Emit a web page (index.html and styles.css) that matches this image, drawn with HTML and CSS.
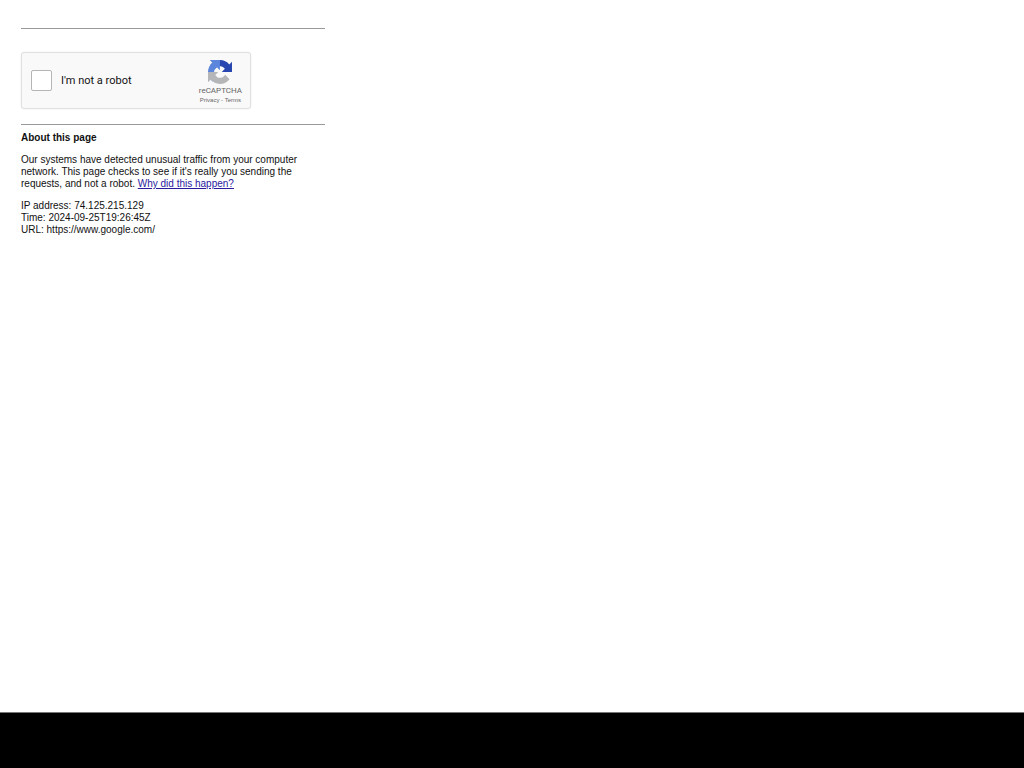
FILE: index.html
```
<!DOCTYPE html>
<html lang="en">
<head>
    <meta charset="UTF-8">
    <meta name="viewport" content="width=device-width, initial-scale=1.0">
    <title>https://www.google.com/</title>
    <link rel="stylesheet" href="styles.css">
</head>
<body>
    <main class="page">
        <hr>

        <form class="captcha">
            <input type="checkbox" id="robot">
            <label for="robot">I'm not a robot</label>
            <div class="brand">
                <svg class="logo" viewBox="0 0 64 64" aria-hidden="true">
                    <path fill="#2746b0" d="M64 31.955l-.033-1.37V4.687l-7.16 7.16C50.948 4.674 42.033.093 32.05.093c-10.4 0-19.622 4.96-25.458 12.64l11.736 11.86a15.55 15.55 0 0 1 4.754-5.334c2.05-1.6 4.952-2.906 8.968-2.906.485 0 .86.057 1.135.163 4.976.393 9.288 3.14 11.828 7.124l-8.307 8.307L64 31.953"/>
                    <path fill="#5b86dc" d="M31.862.094l-1.37.033H4.594l7.16 7.16C4.58 13.147 0 22.06 0 32.046c0 10.4 4.96 19.622 12.64 25.458L24.5 45.768a15.55 15.55 0 0 1-5.334-4.754c-1.6-2.05-2.906-4.952-2.906-8.968 0-.485.057-.86.163-1.135.393-4.976 3.14-9.288 7.124-11.828l8.307 8.307L31.86.095"/>
                    <path fill="#b4b6b8" d="M.001 32.045l.033 1.37v25.898l7.16-7.16c5.86 7.173 14.774 11.754 24.76 11.754 10.4 0 19.622-4.96 25.458-12.64l-11.736-11.86a15.55 15.55 0 0 1-4.754 5.334c-2.05 1.6-4.952 2.906-8.968 2.906-.485 0-.86-.057-1.135-.163-4.976-.393-9.288-3.14-11.828-7.124l8.307-8.307c-10.522.04-22.4.066-27.295-.005"/>
                </svg>
                <div class="brand-name">reCAPTCHA</div>
                <div class="brand-links"><a href="#">Privacy</a> - <a href="#">Terms</a></div>
            </div>
        </form>

        <hr>

        <h1>About this page</h1>
        <p>Our systems have detected unusual traffic from your computer network. This page checks to see if it's really you sending the requests, and not a robot. <a href="#">Why did this happen?</a></p>
        <p>IP address: 74.125.215.129<br>Time: 2024-09-25T19:26:45Z<br>URL: https://www.google.com/</p>
    </main>
    <footer class="bottom-bar"></footer>
</body>
</html>
```

FILE: styles.css
```
* {
    box-sizing: border-box;
}
body {
    margin: 0;
    min-height: 100vh;
    display: flex;
    flex-direction: column;
    background: #fff;
    color: #111;
    font-family: "Liberation Sans", Arial, sans-serif;
    font-size: 10px;
    line-height: 12px;
}
.page {
    flex: 1;
    width: 100%;
    max-width: 346px;
    padding: 28px 21px;
}
hr {
    height: 1px;
    margin: 0;
    border: none;
    background: #999;
}
.captcha {
    display: flex;
    align-items: center;
    max-width: 230px;
    margin: 23px 0 15px;
    padding: 0 8px 0 9px;
    border: 1px solid #e0e0e0;
    border-radius: 3px;
    background: #f9f9f9;
    box-shadow: 0 0 2px rgba(0,0,0,0.08);
}
.captcha input {
    appearance: none;
    width: 21px;
    height: 21px;
    margin: 0 9px 0 0;
    border: 1px solid #b5b5b5;
    border-radius: 2px;
    background: #fff;
}
.captcha label {
    flex: 1;
    font-family: Roboto, "Liberation Sans", sans-serif;
    font-size: 11px;
}
.brand {
    padding: 7px 0 4px;
    color: #666;
    text-align: center;
}
.logo {
    display: block;
    width: 24px;
    height: 24px;
    margin: 0 auto 2px;
}
.brand-name {
    font-family: Roboto, "Liberation Sans", sans-serif;
    font-size: 8px;
    line-height: 10px;
}
.brand-links {
    font-size: 6px;
    line-height: 8px;
}
.brand-links a {
    color: inherit;
    text-decoration: none;
}
h1 {
    margin: 7px 0 10px;
    font-size: 10px;
    line-height: 12px;
}
p {
    margin: 0 0 10px;
}
p a {
    color: #2a1a9e;
}
.bottom-bar {
    height: 56px;
    border-top: 1px solid #777;
    background: #000;
}
```
